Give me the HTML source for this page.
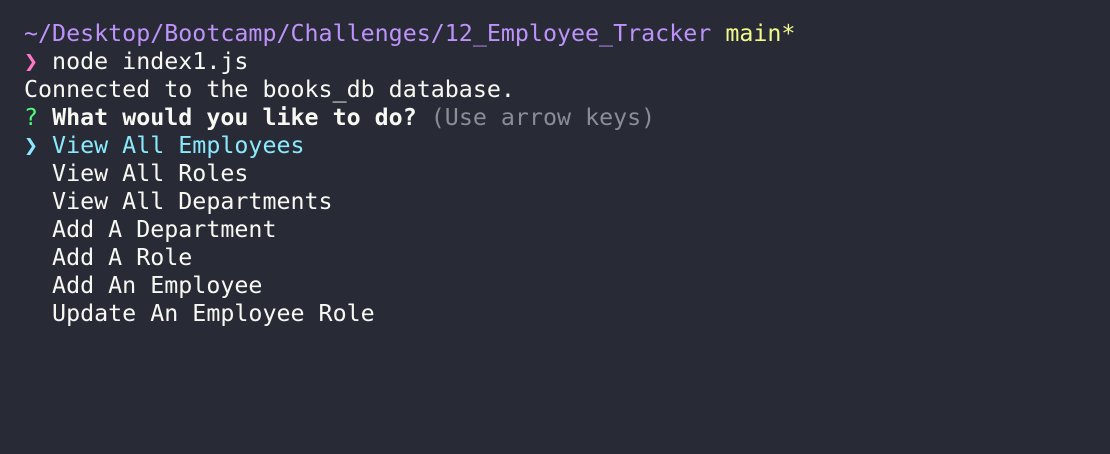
<!DOCTYPE html>
<html><head><meta charset="utf-8"><style>
html,body{margin:0;padding:0;background:#282a36;width:1110px;height:454px;overflow:hidden}
pre{margin:0;position:absolute;left:24px;top:20px;font-family:"DejaVu Sans Mono","Liberation Mono",monospace;font-size:23.3px;line-height:28px;color:#f8f8f2}
.p{color:#bd93f9}.y{color:#f1fa8c}.k{color:#ff79c6}.g{color:#50fa7b}.c{color:#8be9fd}.d{color:#8b8d96}b{font-weight:bold}
</style></head><body><pre><span class="p">~/Desktop/Bootcamp/Challenges/12_Employee_Tracker</span> <span class="y">main*</span>
<span class="k">❯</span> node index1.js
Connected to the books_db database.
<span class="g">?</span> <b>What would you like to do?</b> <span class="d">(Use arrow keys)</span>
<span class="c">❯ View All Employees</span>
  View All Roles
  View All Departments
  Add A Department
  Add A Role
  Add An Employee
  Update An Employee Role</pre></body></html>
